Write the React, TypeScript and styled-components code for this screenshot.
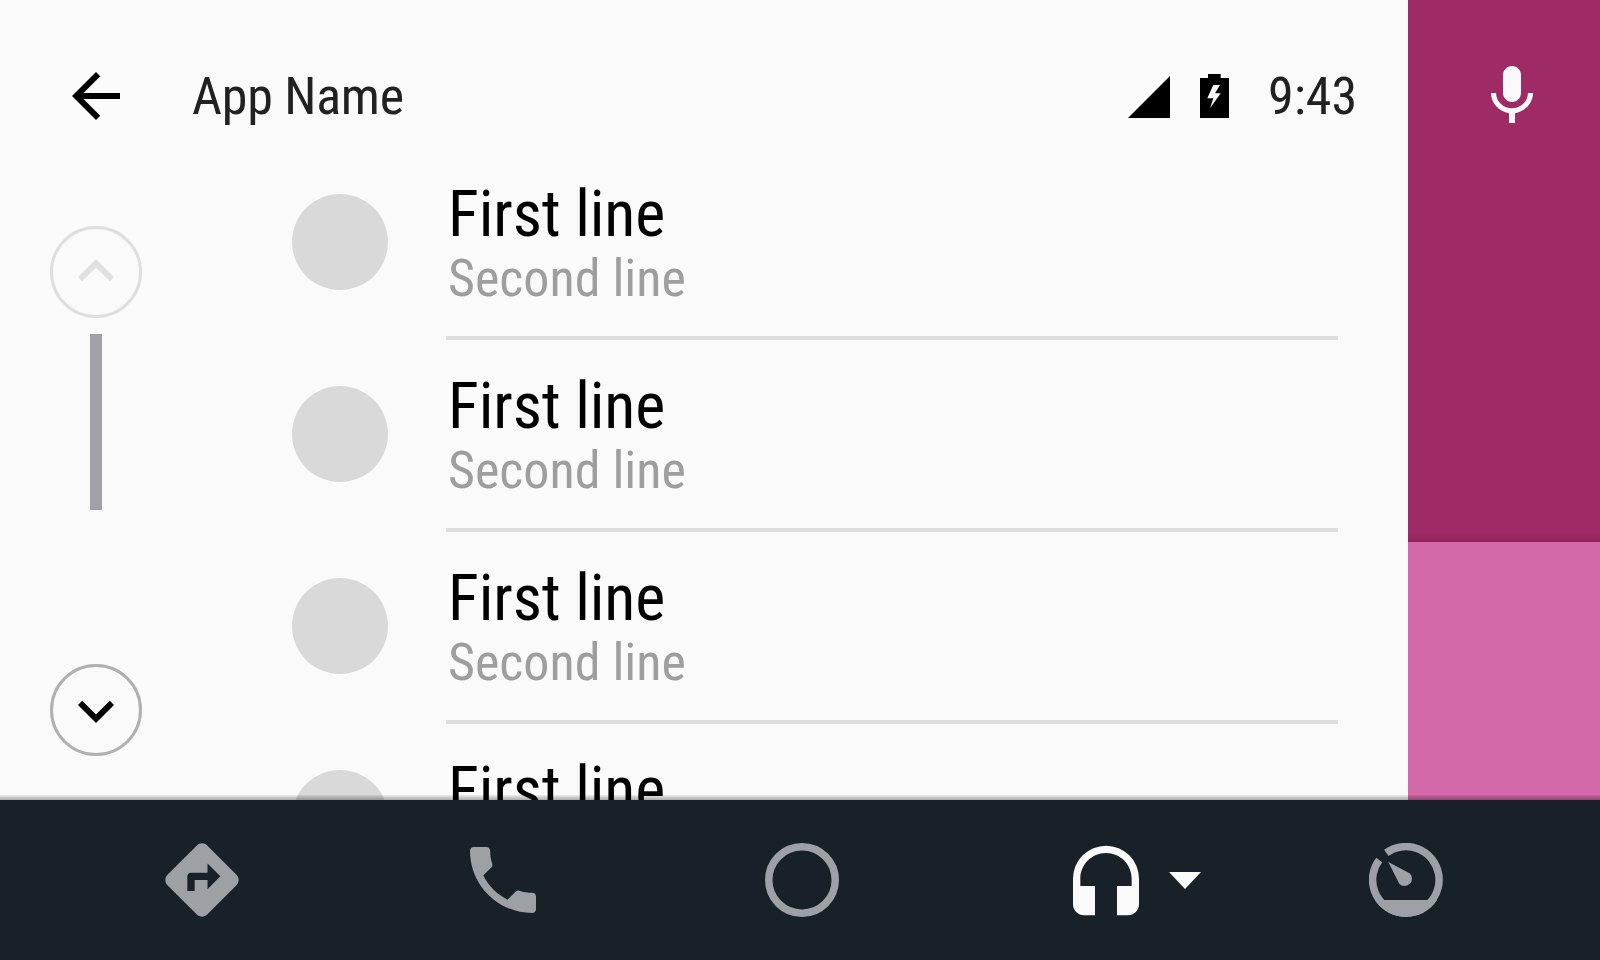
import React from "react";
import styled, { createGlobalStyle } from "styled-components";
import {
  MdArrowBack,
  MdDirections,
  MdHeadset,
  MdKeyboardArrowDown,
  MdKeyboardArrowUp,
  MdLocalPhone,
  MdMic
} from "react-icons/md";

const GlobalStyle = createGlobalStyle`
  html, body {
    margin: 0;
    padding: 0;
    background: #fafafa;
    font-family: Roboto, "Liberation Sans", sans-serif;
  }
`;

const Screen = styled.div`
  width: 1600px;
  height: 960px;
  display: flex;
  flex-direction: column;
  overflow: hidden;
`;

const Top = styled.div`
  display: flex;
  height: 800px;
`;

const Main = styled.main`
  width: 1408px;
  display: flex;
  flex-direction: column;
  background: #fafafa;
`;

const Header = styled.header`
  height: 148px;
  box-sizing: border-box;
  padding: 60px 52px 16px 60px;
  display: flex;
  align-items: flex-start;
  color: #000;
`;

const Condensed = styled.span`
  display: inline-block;
  font-stretch: 75%;
  white-space: nowrap;
`;

const Title = styled(Condensed)`
  margin: 1px 0 0 60px;
  font-size: 52px;
  line-height: 72px;
  letter-spacing: -0.25px;
  color: #212121;
  flex: 1;
`;

const Clock = styled(Condensed)`
  margin: 1px 0 0 39px;
  width: 88px;
  font-size: 52px;
  line-height: 72px;
  color: #212121;
`;

const StatusIcon = styled.svg<{ $gap?: number }>`
  display: block;
  margin-top: ${({ $gap }) => ($gap ? 14 : 16)}px;
  margin-left: ${({ $gap }) => $gap || 0}px;
`;

const Body = styled.div`
  flex: 1;
  display: flex;
  min-height: 0;
  overflow: hidden;
`;

const Pager = styled.div`
  width: 192px;
  flex: none;
  box-sizing: border-box;
  padding-top: 78px;
  display: flex;
  flex-direction: column;
  align-items: center;
`;

const PageButton = styled.div<{ $disabled?: boolean }>`
  width: 92px;
  height: 92px;
  box-sizing: border-box;
  border-radius: 50%;
  border: 3px solid ${({ $disabled }) => ($disabled ? "#dedede" : "#b0b0b0")};
  color: ${({ $disabled }) => ($disabled ? "#e0e0e0" : "#000")};
  padding: ${({ $disabled }) => ($disabled ? "0 0 2px" : "2px 0 0")};
  display: flex;
  align-items: center;
  justify-content: center;
`;

const Track = styled.div`
  width: 12px;
  height: 176px;
  margin: 16px 0 154px;
  background: #9fa3a7;
`;

const List = styled.div`
  flex: 1;
  padding-left: 100px;
`;

const Row = styled.div`
  height: 192px;
  display: flex;
  align-items: flex-start;
`;

const Avatar = styled.div`
  width: 96px;
  height: 96px;
  margin-top: 46px;
  flex: none;
  border-radius: 50%;
  background: #d9d9d9;
`;

const RowText = styled.div`
  width: 892px;
  height: 192px;
  margin-left: 58px;
  box-sizing: border-box;
  padding: 31px 0 0 2px;
  border-bottom: 4px solid #dedede;
  display: flex;
  flex-direction: column;
`;

const FirstLine = styled(Condensed)`
  font-size: 64px;
  line-height: 72px;
  letter-spacing: -0.1px;
  color: #000;
`;

const SecondLine = styled(Condensed)`
  font-size: 52px;
  line-height: 56px;
  color: #9e9e9e;
`;

const Side = styled.aside`
  width: 192px;
  display: flex;
  flex-direction: column;
`;

const MicPanel = styled.div`
  height: 542px;
  box-sizing: border-box;
  padding: 60px 0 0 68px;
  color: #fafafa;
  background: linear-gradient(to bottom, #9e2b66 calc(100% - 10px), #95235f 100%);
`;

const ColorPanel = styled.div`
  flex: 1;
  background: #d369a8;
`;

const NavBar = styled.nav`
  position: relative;
  height: 160px;
  padding-left: 158px;
  display: flex;
  align-items: center;
  background: #182028;
  color: #9da1a5;

  &::before {
    content: "";
    position: absolute;
    left: 0;
    right: 0;
    top: -5px;
    height: 5px;
    background: linear-gradient(to bottom, rgba(0, 0, 0, 0.06), rgba(0, 0, 0, 0.32));
  }
`;

const NavSlot = styled.div<{ $left?: number; $active?: boolean; $down?: number }>`
  display: flex;
  margin-left: ${({ $left }) => $left || 0}px;
  margin-top: ${({ $down }) => $down || 0}px;
  color: ${({ $active }) => ($active ? "#fafafa" : "inherit")};
`;

const rows = [0, 1, 2, 3];

export default function App() {
  return (
    <Screen>
      <GlobalStyle />
      <Top>
        <Main>
          <Header>
            <MdArrowBack size={72} />
            <Title>App Name</Title>
            <StatusIcon width="42" height="42" viewBox="0 0 42 42">
              <polygon points="0,42 42,42 42,0" fill="#000" />
            </StatusIcon>
            <StatusIcon $gap={30} width="29" height="44" viewBox="0 0 29 44">
              <path
                d="M8 0h12.7v4H29v40H0V4h8zM13.3 11L7.3 24.3h6L10 34.3 20.7 19.3H15L20 11z"
                fillRule="evenodd"
                fill="#000"
              />
            </StatusIcon>
            <Clock>9:43</Clock>
          </Header>
          <Body>
            <Pager>
              <PageButton $disabled>
                <MdKeyboardArrowUp size={72} />
              </PageButton>
              <Track />
              <PageButton>
                <MdKeyboardArrowDown size={72} />
              </PageButton>
            </Pager>
            <List>
              {rows.map((row) => (
                <Row key={row}>
                  <Avatar />
                  <RowText>
                    <FirstLine>First line</FirstLine>
                    <SecondLine>Second line</SecondLine>
                  </RowText>
                </Row>
              ))}
            </List>
          </Body>
        </Main>
        <Side>
          <MicPanel>
            <MdMic size={72} />
          </MicPanel>
          <ColorPanel />
        </Side>
      </Top>
      <NavBar>
        <NavSlot>
          <MdDirections size={88} />
        </NavSlot>
        <NavSlot $left={213}>
          <MdLocalPhone size={88} />
        </NavSlot>
        <NavSlot $left={218}>
          <svg width="74" height="74" viewBox="0 0 74 74">
            <circle cx="37" cy="37" r="33.25" fill="none" stroke="#9da1a5" strokeWidth="7.5" />
          </svg>
        </NavSlot>
        <NavSlot $left={223} $active $down={12}>
          <MdHeadset size={88} />
        </NavSlot>
        <NavSlot $left={19} $active>
          <svg width="32" height="17" viewBox="0 0 32 17">
            <polygon points="0,0 32,0 16,17" fill="#fafafa" />
          </svg>
        </NavSlot>
        <NavSlot $left={168}>
          <svg width="74" height="74" viewBox="0 0 74 74" fill="#9da1a5">
            <path
              d="M17.3 9.9A33.25 33.25 0 1 1 10.2 16.9"
              fill="none"
              stroke="#9da1a5"
              strokeWidth="7.5"
            />
            <path d="M5.9 57A37 37 0 0 0 68.1 57Z" />
            <path d="M19.3 19L41 30.4A7.5 7.5 0 0 1 30.4 41Z" />
          </svg>
        </NavSlot>
      </NavBar>
    </Screen>
  );
}
